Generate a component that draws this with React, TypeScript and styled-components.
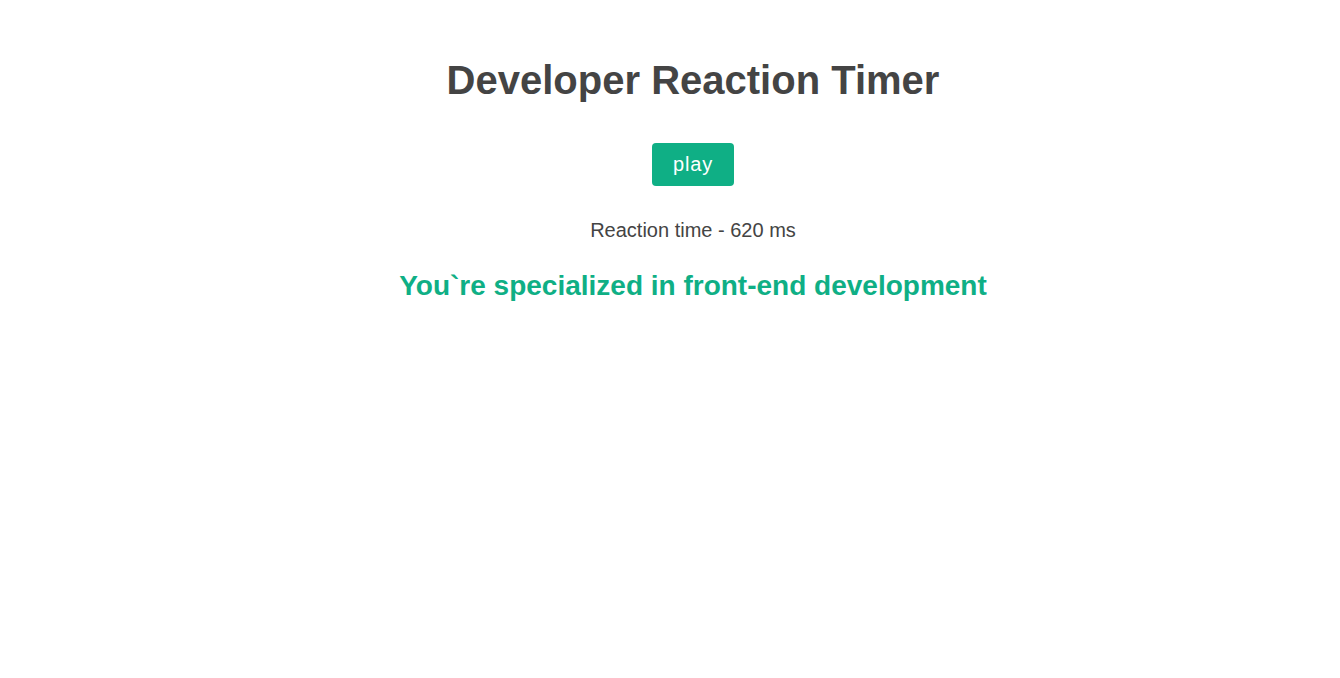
import styled, { createGlobalStyle } from "styled-components"

const GlobalStyle = createGlobalStyle`
  body {
    margin: 0;
    background: #fff;
    font-family: "Liberation Sans", Arial, sans-serif;
    color: #444;
  }
`

const Page = styled.div`
  display: flex;
  flex-direction: column;
  align-items: center;
  padding: 58px 0 0 46px;
  text-align: center;
`

const Title = styled.h1`
  margin: 0;
  font-size: 40px;
  font-weight: bold;
  color: #444;
`

const PlayButton = styled.button`
  margin-top: 40px;
  width: 82px;
  height: 43px;
  border: none;
  border-radius: 4px;
  background: #0faf85;
  color: #fff;
  font-family: "Liberation Sans", Arial, sans-serif;
  font-size: 20px;
  letter-spacing: 0.8px;
  cursor: pointer;
`

const Result = styled.p`
  margin: 33px 0 0;
  font-size: 20px;
  color: #444;
`

const Verdict = styled.h2`
  margin: 28px 0 0;
  font-size: 28px;
  font-weight: bold;
  color: #0faf85;
`

export default function App() {
  return (
    <>
      <GlobalStyle />
      <Page>
        <Title>Developer Reaction Timer</Title>
        <PlayButton>play</PlayButton>
        <Result>Reaction time - 620 ms</Result>
        <Verdict>You`re specialized in front-end development</Verdict>
      </Page>
    </>
  )
}
